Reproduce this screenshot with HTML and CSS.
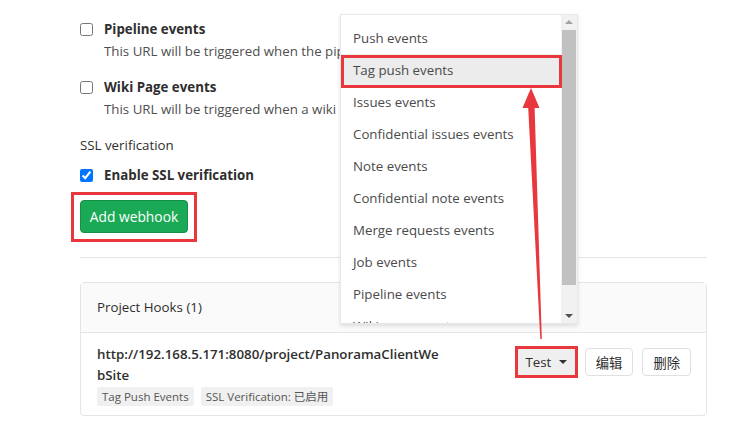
FILE: index.html
```html
<!DOCTYPE html>
<html lang="en">
<head>
<meta charset="utf-8">
<title>Webhooks</title>
<link rel="stylesheet" href="styles.css">
</head>
<body>
<div class="page">
  <div class="check-item">
    <input type="checkbox" class="cb">
    <div class="check-text">
      <div class="check-title">Pipeline events</div>
      <div class="check-help">This URL will be triggered when the pipeline status changes</div>
    </div>
  </div>
  <div class="check-item">
    <input type="checkbox" class="cb">
    <div class="check-text">
      <div class="check-title">Wiki Page events</div>
      <div class="check-help">This URL will be triggered when a wiki page is created/updated</div>
    </div>
  </div>
  <div class="section-label">SSL verification</div>
  <div class="check-item ssl">
    <input type="checkbox" class="cb" checked>
    <div class="check-text">
      <div class="check-title">Enable SSL verification</div>
    </div>
  </div>
  <div class="btn-wrap">
    <button class="btn-green">Add webhook</button>
    <span class="annot annot-add"></span>
  </div>
  <hr class="divider">
  <div class="card">
    <div class="card-header">Project Hooks (1)</div>
    <div class="card-body">
      <div class="hook-info">
        <div class="hook-url">http://192.168.5.171:8080/project/PanoramaClientWebSite</div>
        <div class="tags">
          <span class="tag">Tag Push Events</span>
          <span class="tag">SSL Verification: 已启用</span>
        </div>
      </div>
      <div class="hook-actions">
        <div class="btn-wrap">
          <button class="btn btn-test">Test <span class="caret"></span></button>
          <span class="annot annot-test"></span>
        </div>
        <button class="btn">编辑</button>
        <button class="btn">删除</button>
      </div>
    </div>
  </div>
</div>

<div class="menu">
  <ul class="menu-list">
    <li>Push events</li>
    <li class="active">Tag push events</li>
    <li>Issues events</li>
    <li>Confidential issues events</li>
    <li>Note events</li>
    <li>Confidential note events</li>
    <li>Merge requests events</li>
    <li>Job events</li>
    <li>Pipeline events</li>
    <li>Wiki page events</li>
  </ul>
  <div class="scrollbar">
    <span class="sb-up"></span>
    <span class="sb-thumb"></span>
    <span class="sb-down"></span>
  </div>
  <span class="annot annot-tag"></span>
</div>

<svg class="arrow" width="749" height="428" viewBox="0 0 749 428">
  <polygon points="528,104 534.5,104 541.8,339 540.3,339" fill="#e8383d"/>
  <polygon points="531,88 522.5,108 539.5,108" fill="#e8383d"/>
</svg>
</body>
</html>
```

FILE: styles.css
```css
* { box-sizing: border-box; }
html, body { margin: 0; padding: 0; background: #fff; }
body {
  font-family: "Open Sans", "Noto Sans CJK SC", sans-serif;
  font-size: 13.3px;
  color: #2e2e2e;
  width: 749px;
  height: 428px;
  overflow: hidden;
  position: relative;
}
.page {
  padding: 19px 0 0 80px;
  width: 707px;
}
.check-item {
  display: flex;
  align-items: flex-start;
  margin-bottom: 16px;
}
.cb {
  width: 13px;
  height: 13px;
  margin: 4px 11px 0 0;
  flex: none;
}
.check-title {
  font-weight: 700;
  line-height: 20px;
  color: #2e2e2e;
}
.check-help {
  line-height: 20px;
  margin-top: 2px;
  color: #4f4f4f;
  white-space: nowrap;
}
.section-label {
  line-height: 20px;
  margin-top: 1px;
  color: #2e2e2e;
}
.check-item.ssl { margin-top: 10px; margin-bottom: 15px; }
.btn-wrap { position: relative; display: inline-block; }
.btn-green {
  font: inherit;
  font-size: 13.8px;
  background: #1aaa55;
  color: #fff;
  border: 1px solid #168f48;
  border-radius: 4px;
  height: 33px;
  width: 108px;
  padding: 0;
  display: block;
}
.annot {
  position: absolute;
  border: 3px solid #e8383d;
  pointer-events: none;
}
.annot-add { left: -9px; top: -8px; right: -9px; bottom: -9px; }
.divider {
  border: 0;
  border-top: 1px solid #e5e5e5;
  margin: 24px 0 24px 0;
}
.card {
  border: 1px solid #e5e5e5;
  border-radius: 4px;
  width: 627px;
}
.card-header {
  background: #fafafa;
  border-bottom: 1px solid #e5e5e5;
  height: 50px;
  line-height: 49px;
  padding-left: 16px;
  color: #2e2e2e;
}
.card-body {
  display: flex;
  justify-content: space-between;
  align-items: flex-start;
  padding: 11px 15px 9px 16px;
}
.hook-info { width: 345px; }
.hook-url {
  font-weight: 600;
  line-height: 21px;
  word-break: break-all;
  color: #2e2e2e;
}
.tags { display: flex; gap: 7px; margin-top: 1px; }
.tag {
  background: #f0f0f0;
  color: #555;
  font-size: 11.5px;
  height: 19px;
  line-height: 19px;
  padding: 0 5px;
  border-radius: 2px;
}
.hook-actions {
  display: flex;
  gap: 9px;
  margin-top: 4px;
}
.btn {
  font: inherit;
  font-size: 13.3px;
  height: 28px;
  padding: 0 10px;
  background: #fff;
  border: 1px solid #e0e0e0;
  border-radius: 4px;
  color: #2e2e2e;
  display: inline-flex;
  align-items: center;
}
.btn-test {
  background: #efefef;
  width: 59px;
  justify-content: center;
  gap: 8px;
  padding: 0;
}
.caret {
  width: 0; height: 0;
  border-left: 4px solid transparent;
  border-right: 4px solid transparent;
  border-top: 4px solid #333;
}
.annot-test { left: -2px; top: -2px; right: -2px; bottom: -2px; }

.menu {
  position: absolute;
  left: 340px;
  top: 14px;
  width: 238px;
  height: 310px;
  background: #fff;
  border: 1px solid #e8e8e8;
  box-shadow: 0 2px 4px rgba(0,0,0,0.12);
  display: flex;
}
.menu-list {
  list-style: none;
  margin: 0;
  padding: 7px 0 0 0;
  flex: 1;
  overflow: hidden;
}
.menu-list li {
  height: 32px;
  line-height: 32px;
  padding-left: 12px;
  color: #4a4a4a;
  white-space: nowrap;
}
.menu-list li.active { background: #ececec; }
.scrollbar {
  width: 16px;
  background: #f1f1f1;
  display: flex;
  flex-direction: column;
  align-items: center;
}
.sb-up, .sb-down {
  height: 15px;
  width: 16px;
  position: relative;
  flex: none;
}
.sb-up::after, .sb-down::after {
  content: "";
  position: absolute;
  left: 4px; top: 5px;
  border-left: 4px solid transparent;
  border-right: 4px solid transparent;
}
.sb-up::after { border-bottom: 4px solid #a3a3a3; }
.sb-down::after { border-top: 4px solid #505050; top: 6px; }
.sb-thumb {
  width: 14px;
  height: 255px;
  background: #c1c1c1;
  flex: none;
}
.sb-down { margin-top: auto; }
.annot-tag { left: 0; top: 40px; width: 221px; height: 33px; }
.arrow { position: absolute; left: 0; top: 0; pointer-events: none; }
```
